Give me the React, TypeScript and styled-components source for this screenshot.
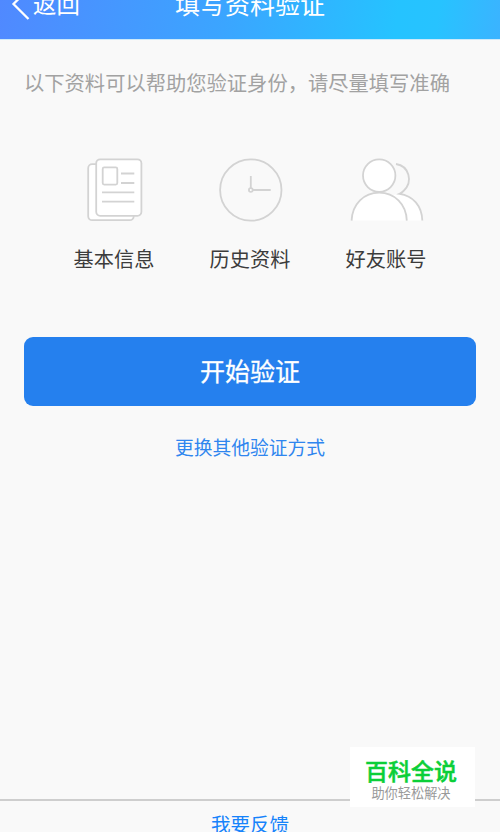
import React from "react";
import styled, { createGlobalStyle } from "styled-components";

const GlobalStyle = createGlobalStyle`
  * { box-sizing: border-box; }
  html, body { margin: 0; padding: 0; background: #f9f9f9; }
  body {
    overflow: hidden;
    font-family: "Noto Sans CJK SC", "Noto Sans", sans-serif;
  }
  button { font-family: inherit; border: 0; padding: 0; background: none; }
`;

const Screen = styled.div`
  position: relative;
  display: flex;
  flex-direction: column;
  width: 500px;
  height: 832px;
  overflow: hidden;
  background: #f9f9f9;
`;

const Header = styled.header`
  flex: none;
  height: 39px;
  overflow: hidden;
  background: linear-gradient(100deg, #5089ff 0%, #3ba5ff 45%, #25c3ff 79%, #27c3ff 87%, #3bb3ff 100%);
  box-shadow: 0 1px 0 #cdeafa;
`;

const NavBar = styled.div`
  display: grid;
  grid-template-columns: 1fr auto 1fr;
  align-items: center;
  height: 68px;
  margin-top: -31px;
  color: #fff;
`;

const Back = styled.button`
  display: flex;
  align-items: center;
  padding-left: 11px;
  gap: 3px;
  color: #fff;
  font-size: 23.4px;
  line-height: 30px;
  svg { flex: none; }
`;

const Title = styled.h1`
  margin: 0;
  font-size: 25px;
  font-weight: 400;
  line-height: 34px;
`;

const Content = styled.main`
  flex: 1;
  display: flex;
  flex-direction: column;
  padding: 0 24px;
`;

const Intro = styled.p`
  margin: 29px 0 0;
  color: #a2a2a2;
  font-size: 20.3px;
  line-height: 29px;
  white-space: nowrap;
`;

const Methods = styled.div`
  display: grid;
  grid-template-columns: repeat(3, 136px);
  justify-content: center;
  margin-top: 59px;
`;

const Method = styled.div`
  display: flex;
  flex-direction: column;
  align-items: center;
`;

const MethodIcon = styled.svg`
  width: 76px;
  height: 68px;
  fill: #fff;
  stroke: #d3d3d3;
  stroke-width: 1.8;
`;

const MethodLabel = styled.span`
  margin-top: 20px;
  color: #3c3c3c;
  font-size: 20.2px;
  line-height: 30px;
`;

const PrimaryButton = styled.button`
  flex: none;
  height: 69.5px;
  margin-top: 62.5px;
  border-radius: 9px;
  background: #2580ee;
  color: #fff;
  font-size: 25px;
  font-weight: 400;
  line-height: 67px;
  padding-bottom: 2px;
  -webkit-text-stroke: 0.3px #fff;
`;

const TextLink = styled.button`
  align-self: center;
  margin-top: 26px;
  color: #2f86ef;
  font-size: 18.75px;
  line-height: 30px;
`;

const Footer = styled.footer`
  flex: none;
  display: flex;
  justify-content: center;
  height: 33px;
  border-top: 2px solid #cecece;
  padding-top: 8px;
`;

const Feedback = styled.button`
  height: 30px;
  color: #1683fb;
  font-size: 19.5px;
  line-height: 30px;
`;

const Watermark = styled.aside`
  position: absolute;
  right: 25px;
  bottom: 25px;
  display: flex;
  flex-direction: column;
  align-items: center;
  width: 125px;
  height: 60px;
  padding: 10px 3px 0 0;
  background: #fff;
`;

const WatermarkName = styled.strong`
  color: #0bcf38;
  font-size: 23px;
  font-weight: 500;
  line-height: 27px;
  -webkit-text-stroke: 0.5px #0bcf38;
`;

const WatermarkTagline = styled.span`
  color: #999;
  font-size: 13.2px;
  line-height: 18px;
`;

const DocumentsIcon = () => (
  <MethodIcon viewBox="0 0 76 68">
    <rect x="12.2" y="8.2" width="45.5" height="56" rx="4" />
    <rect x="20.2" y="3.3" width="45.2" height="56.5" rx="4" />
    <rect x="26.7" y="11.4" width="14.6" height="17.2" rx="1.5" />
    <path d="M45 17.5h13.3M45 27h13.3M26 36.4h32.3M26 45.6h32.3" />
  </MethodIcon>
);

const ClockIcon = () => (
  <MethodIcon viewBox="0 0 76 68">
    <circle cx="38.8" cy="34" r="30.7" fill="none" />
    <path d="M38.8 20v12.5M40.7 34h18" />
    <circle cx="38.8" cy="34" r="1.9" />
  </MethodIcon>
);

const FriendsIcon = () => (
  <MethodIcon viewBox="0 0 76 68">
    <path d="M51.5 38C64 39.5 73.5 50 73.8 64.6H58C57 53 52 44 44 39z" stroke="none" />
    <path d="M48 8c13 2 17.5 17.5 7.5 27-1.4 1.4-2.6 2.2-4 2.8C65 39.5 74 50 74.3 64.6" fill="none" />
    <circle cx="31.2" cy="19.6" r="16.2" />
    <path d="M3.6 64.6C4.3 48 16 36.6 31.2 36.6s27 11.4 27.6 28" />
  </MethodIcon>
);

const methods = [
  { label: "基本信息", Icon: DocumentsIcon },
  { label: "历史资料", Icon: ClockIcon },
  { label: "好友账号", Icon: FriendsIcon },
];

export default function App() {
  return (
    <>
      <GlobalStyle />
      <Screen>
        <Header>
          <NavBar>
            <Back>
              <svg width="19" height="34" viewBox="0 0 19 34" fill="none" stroke="#fff" strokeWidth="2.3">
                <path d="M17.5 3L2.5 18L17.5 33" />
              </svg>
              返回
            </Back>
            <Title>填写资料验证</Title>
          </NavBar>
        </Header>
        <Content>
          <Intro>以下资料可以帮助您验证身份，请尽量填写准确</Intro>
          <Methods>
            {methods.map(({ label, Icon }) => (
              <Method key={label}>
                <Icon />
                <MethodLabel>{label}</MethodLabel>
              </Method>
            ))}
          </Methods>
          <PrimaryButton>开始验证</PrimaryButton>
          <TextLink>更换其他验证方式</TextLink>
        </Content>
        <Footer>
          <Feedback>我要反馈</Feedback>
        </Footer>
        <Watermark>
          <WatermarkName>百科全说</WatermarkName>
          <WatermarkTagline>助你轻松解决</WatermarkTagline>
        </Watermark>
      </Screen>
    </>
  );
}
